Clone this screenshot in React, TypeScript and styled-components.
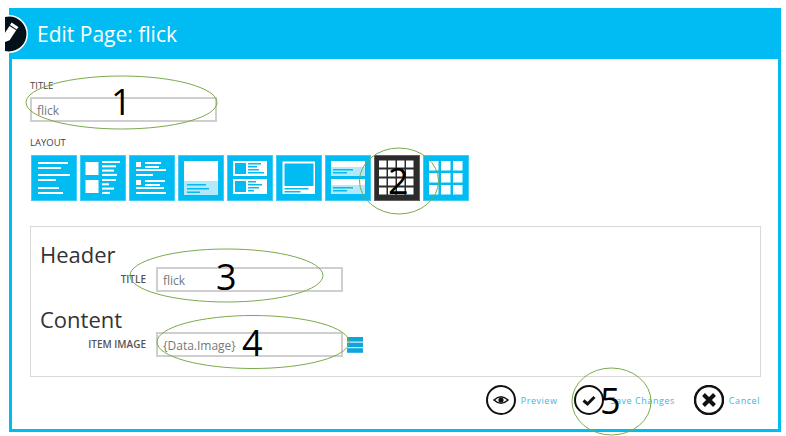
import React from "react";
import styled, { createGlobalStyle } from "styled-components";

const Global = createGlobalStyle`
  html, body { margin: 0; padding: 0; background: #fff; }
  body { font-family: "Open Sans", "Noto Sans", sans-serif; }
`;

const CYAN = "#00bcf2";
const PALE = "#b3e9fa";

const Page = styled.div`
  position: relative;
  width: 786px;
  height: 436px;
  overflow: hidden;
  background: #fff;
  padding: 8px 5px 4px 9px;
  box-sizing: border-box;
`;
const Frame = styled.div`
  height: 100%;
  box-sizing: border-box;
  border: 3px solid ${CYAN};
  border-top-width: 1px;
  display: flex;
  flex-direction: column;
`;
const TitleBar = styled.header`
  height: 50px;
  flex: none;
  background: ${CYAN};
  display: flex;
  align-items: center;
  padding-left: 28px;
  margin: 0 -3px;
  color: #fff;
  font-size: 21px;
  line-height: 50px;
`;
const Body = styled.div`
  flex: 1;
  padding: 21px 18px 0 18px;
  display: flex;
  flex-direction: column;
`;
const FieldLabel = styled.div`
  font-size: 9.5px;
  line-height: 12px;
  height: 12px;
  color: #444;
  text-transform: uppercase;
`;
const TextBox = styled.div<{ $w: number }>`
  width: ${(p) => p.$w}px;
  height: 25px;
  box-sizing: border-box;
  border: 2px solid #cfcfcf;
  color: #777;
  font-size: 12px;
  line-height: 24px;
  padding-left: 5px;
  background: #fff;
`;
const TopBox = styled(TextBox)`
  margin-top: 5px;
`;
const LayoutLabel = styled(FieldLabel)`
  margin-top: 15px;
`;
const ThumbRow = styled.div`
  display: flex;
  gap: 3px;
  margin: 6px 0 0 1px;
`;
const Panel = styled.section`
  margin-top: 25px;
  width: 731px;
  height: 151px;
  box-sizing: border-box;
  border: 1px solid #d9d9d9;
  padding: 12px 9px 0;
`;
const SectionTitle = styled.h2`
  margin: 0;
  font-weight: 400;
  font-size: 22px;
  line-height: 30px;
  color: #333;
`;
const FormRow = styled.div`
  display: flex;
  align-items: center;
  height: 25px;
  margin-top: -2px;
`;
const RowLabel = styled.div`
  width: 106px;
  text-align: right;
  font-size: 10px;
  font-weight: 600;
  color: #555;
  margin-right: 10px;
  padding-bottom: 2px;
`;
const RowGroup = styled.div`
  margin-bottom: 12px;
`;
const Footer = styled.div`
  display: flex;
  justify-content: flex-end;
  align-items: center;
  margin-top: 8px;
  height: 30px;
`;
const Action = styled.div<{ $gap: number; $icon: number }>`
  display: flex;
  align-items: center;
  gap: ${(p) => p.$icon}px;
  margin-left: ${(p) => p.$gap}px;
  color: #3fb4e0;
  font-size: 9px;
  letter-spacing: 0.55px;
`;
const Badge = styled.div`
  position: absolute;
  left: 5px;
  top: 15px;
  width: 24px;
  height: 38px;
  overflow: hidden;
`;
const Notes = styled.svg`
  position: absolute;
  inset: 0;
  pointer-events: none;
`;
const Num = styled.div<{ $x: number; $y: number }>`
  position: absolute;
  left: ${(p) => p.$x}px;
  top: ${(p) => p.$y}px;
  font-size: 36px;
  line-height: 40px;
  color: #000;
  font-family: "Open Sans", sans-serif;
`;
const ListIcon = styled.svg`
  display: block;
  margin-left: 4px;
`;
const ThumbSvg = styled.svg`
  display: block;
`;
const RingSvg = styled.svg`
  display: block;
`;

type R = [number, number, number, number, string?];
const w = "#fff";
const bars = (x: number, y: number, items: number[], step: number, c = w, h = 2): R[] =>
  items.map((l, i) => [x, y + i * step, l, h, c] as R);

const thumbs: { bg?: string; r: R[] }[] = [
  { r: [...bars(7, 7, [30, 23], 5), ...bars(7, 19, [32, 18], 5), ...bars(7, 32, [21, 25], 5)] },
  {
    r: [
      [5.5, 7, 13, 13, w], [5.5, 25, 13, 13, w],
      ...bars(22, 6, [18, 14, 12, 15], 4.3),
      ...bars(22, 24, [14, 7, 12, 8], 4.3),
    ],
  },
  {
    r: [
      [7, 7, 5, 5, w], [7, 25, 5, 5, w],
      ...bars(16, 7, [16, 14], 4),
      [7, 14, 30, 2, w], [7, 19, 17, 2, w],
      ...bars(16, 25, [20, 15], 4),
      [7, 32, 28, 2, w], [7, 37, 30, 2, w],
    ],
  },
  {
    r: [
      [6, 6, 34, 20, w], [6, 26, 34, 14, PALE],
      [9, 29, 19, 1.5, CYAN], [9, 33, 22, 1.5, CYAN], [9, 36.5, 13, 1.5, CYAN],
    ],
  },
  {
    r: [
      [6, 6, 34, 15, w], [8, 8, 11, 11, CYAN],
      [6, 24, 34, 15, w], [8, 26, 11, 11, CYAN],
      ...bars(21, 8, [13, 9, 11, 16], 3, CYAN, 1.5),
      ...bars(21, 26, [8, 14, 11, 6], 3, CYAN, 1.5),
    ],
  },
  {
    r: [
      [6.5, 6.5, 32.5, 32.5, w], [8.5, 8.5, 29, 22.5, CYAN],
      [8.5, 33, 24, 1.5, CYAN], [8.5, 36, 16, 1.5, CYAN],
    ],
  },
  {
    r: [
      [6, 6, 34, 6, w], [6, 12, 34, 9, PALE], [6, 24, 34, 6, w], [6, 30, 34, 9, PALE],
      [8, 14, 20, 1.5, CYAN], [8, 17, 14, 1.5, CYAN],
      [8, 32, 20, 1.5, CYAN], [8, 35, 14, 1.5, CYAN],
    ],
  },
  {
    bg: "#2b2b2b",
    r: [0, 1, 2, 3].flatMap((row) =>
      [0, 1, 2, 3].map((col) => [5 + col * 9, 5.5 + row * 9, 7.5, 7, w] as R)
    ),
  },
  {
    r: [0, 1, 2].flatMap((row) =>
      [0, 1, 2].map((col) => [6 + col * 12, 6 + row * 12, 9.5, 9.5, w] as R)
    ),
  },
];

const Thumb = ({ bg = CYAN, r }: { bg?: string; r: R[] }) => (
  <ThumbSvg width="46" height="46" viewBox="0 0 46 46">
    <rect width="46" height="46" fill={bg} />
    <rect x=".5" y=".5" width="45" height="45" fill="none" stroke="#fff" strokeOpacity=".25" />
    {r.map(([x, y, wd, h, c], i) => (
      <rect key={i} x={x} y={y} width={wd} height={h} fill={c} />
    ))}
  </ThumbSvg>
);

const Ring = ({ children, sw = 2 }: { children: React.ReactNode; sw?: number }) => (
  <RingSvg width="30" height="30" viewBox="0 0 30 30">
    <circle cx="15" cy="15" r="14" fill="#fff" stroke="#111" strokeWidth={sw} />
    {children}
  </RingSvg>
);

export default function App() {
  return (
    <Page>
      <Global />
      <Frame>
        <TitleBar>Edit Page: flick</TitleBar>
        <Body>
          <FieldLabel>Title</FieldLabel>
          <TopBox $w={187}>flick</TopBox>
          <LayoutLabel>Layout</LayoutLabel>
          <ThumbRow>
            {thumbs.map((t, i) => (
              <Thumb key={i} bg={t.bg} r={t.r} />
            ))}
          </ThumbRow>
          <Panel>
            <SectionTitle>Header</SectionTitle>
            <RowGroup>
              <FormRow>
                <RowLabel>TITLE</RowLabel>
                <TextBox $w={187}>flick</TextBox>
              </FormRow>
            </RowGroup>
            <SectionTitle>Content</SectionTitle>
            <FormRow>
              <RowLabel>ITEM IMAGE</RowLabel>
              <TextBox $w={187}>{"{Data.Image}"}</TextBox>
              <ListIcon width="16" height="16" viewBox="0 0 16 16">
                <rect x="0" y="0" width="16" height="4.6" fill="#0ea5dc" />
                <rect x="0" y="5.6" width="16" height="4.6" fill="#0ea5dc" />
                <rect x="0" y="11.2" width="16" height="4.6" fill="#0ea5dc" />
              </ListIcon>
            </FormRow>
          </Panel>
          <Footer>
            <Action $gap={0} $icon={5}>
              <Ring>
                <path d="M8 15 Q15 8.5 22 15 Q15 21.5 8 15Z" fill="none" stroke="#111" strokeWidth="1.6" />
                <circle cx="15" cy="15" r="2.6" fill="#111" />
              </Ring>
              Preview
            </Action>
            <Action $gap={17} $icon={6}>
              <Ring>
                <path d="M9.5 15.5 L13.5 19 L20.5 12" fill="none" stroke="#111" strokeWidth="3" />
              </Ring>
              Save Changes
            </Action>
            <Action $gap={19} $icon={5}>
              <Ring sw={2.5}>
                <path d="M9.5 9.5 L20.5 20.5 M20.5 9.5 L9.5 20.5" fill="none" stroke="#111" strokeWidth="4" />
              </Ring>
              Cancel
            </Action>
          </Footer>
        </Body>
      </Frame>

      <Badge>
        <svg width="24" height="38" viewBox="0 0 24 38">
          <circle cx="4" cy="19" r="18.2" fill="#04101a" stroke="#fff" strokeWidth="1.5" />
          <g transform="rotate(33 4 19)">
            <rect x="0" y="8" width="8" height="3" fill="#fff" />
            <path d="M0 12 H8 V24 L4 29 L0 24Z" fill="#fff" />
          </g>
        </svg>
      </Badge>

      <Notes width="786" height="436" viewBox="0 0 786 436">
        <g fill="none" stroke="#7aab4c" strokeWidth="1">
          <ellipse cx="121.5" cy="102.5" rx="95.5" ry="26.5" />
          <ellipse cx="399" cy="181" rx="39.5" ry="33" />
          <ellipse cx="226.5" cy="275.5" rx="96.5" ry="26.5" />
          <ellipse cx="253" cy="342" rx="96" ry="26.5" />
          <ellipse cx="611.5" cy="401.5" rx="39.5" ry="33.5" />
        </g>
      </Notes>
      <Num $x={111} $y={82}>1</Num>
      <Num $x={388} $y={161}>2</Num>
      <Num $x={216} $y={257}>3</Num>
      <Num $x={242} $y={323}>4</Num>
      <Num $x={600} $y={381}>5</Num>
    </Page>
  );
}
